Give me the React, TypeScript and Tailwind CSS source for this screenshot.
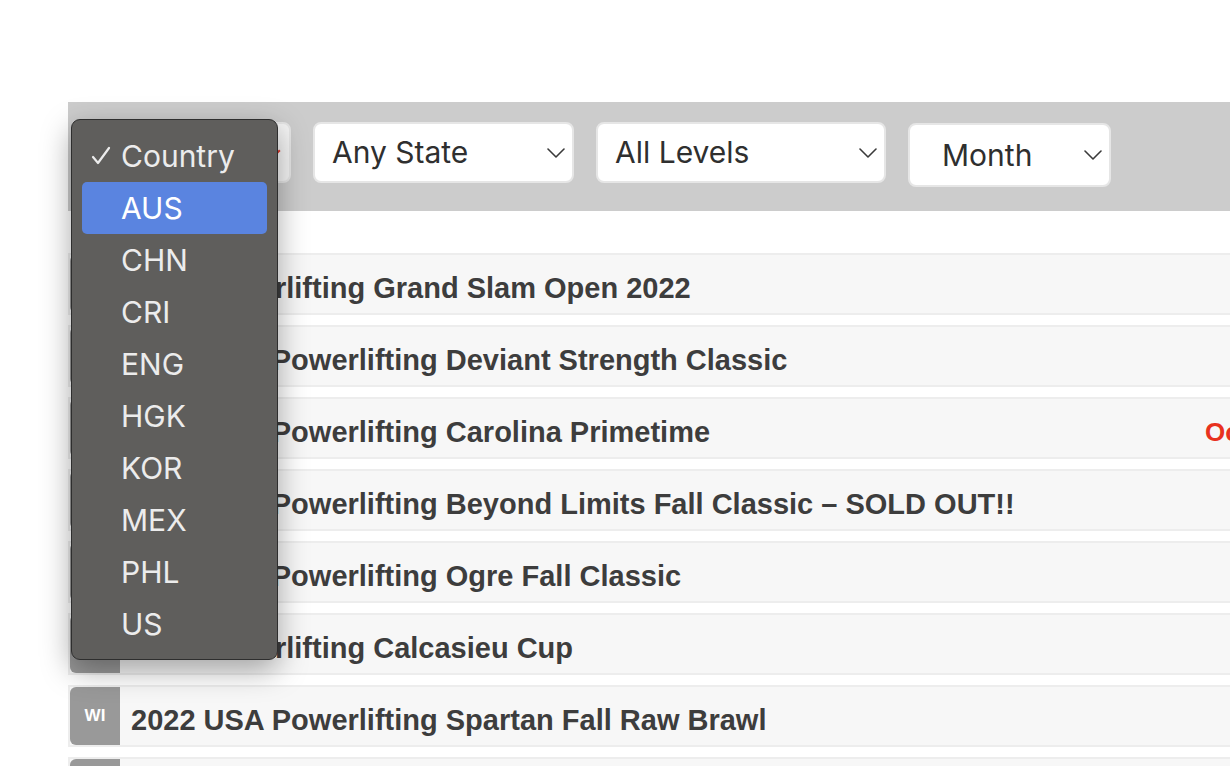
const rows = [
  { st: "", title: "USA Powerlifting Grand Slam Open 2022", date: "" },
  { st: "", title: "2022 USA Powerlifting Deviant Strength Classic", date: "" },
  { st: "", title: "2022 USA Powerlifting Carolina Primetime", date: "Oct 22, 2022" },
  { st: "", title: "2022 USA Powerlifting Beyond Limits Fall Classic – SOLD OUT!!", date: "" },
  { st: "", title: "2022 USA Powerlifting Ogre Fall Classic", date: "" },
  { st: "", title: "USA Powerlifting Calcasieu Cup", date: "" },
  { st: "WI", title: "2022 USA Powerlifting Spartan Fall Raw Brawl", date: "" },
  { st: "", title: "2022 USA Powerlifting Fall Open", date: "" },
];

const countries = ["AUS", "CHN", "CRI", "ENG", "HGK", "KOR", "MEX", "PHL", "US"];

function Chevron() {
  return (
    <svg width="18" height="10" viewBox="0 0 18 10" fill="none" className="shrink-0">
      <polyline points="1,1 9,9 17,1" stroke="#3a3a3a" strokeWidth="1.6" strokeLinecap="round" strokeLinejoin="round" />
    </svg>
  );
}

function Select({ label, w, h = "h-[61px]", pl = "pl-[17px]" }: { label: string; w: string; h?: string; pl?: string }) {
  return (
    <div className={`${w} ${h} ${pl} shrink-0 flex items-center justify-between pr-[7px] bg-white border-2 border-[#e6e6e6] rounded-lg text-[30px] text-[#2f2f2f] font-['Inter',sans-serif]`}>
      <span>{label}</span>
      <Chevron />
    </div>
  );
}

export default function App() {
  return (
    <div className="relative w-full h-screen overflow-hidden bg-white font-['Liberation_Sans',Arial,sans-serif]">
      <div className="pt-[102px] pl-[68px] w-[1400px]">
        <div className="h-[109px] bg-[#cccccc] flex items-start gap-[22px] pl-[4px] pt-[20px]">
          <div className="w-[219px] h-[61px] shrink-0 bg-[#f5f5f5] border-2 border-[#e6e6e6] rounded-lg flex items-center justify-end pr-2">
            <span className="block w-[8px] h-[2px] bg-[#e0362a] -rotate-45" />
          </div>
          <Select label="Any State" w="w-[261px]" />
          <Select label="All Levels" w="w-[290px]" />
          <Select label="Month" w="w-[203px]" h="h-[64px] mt-[1px]" pl="pl-[32px]" />
        </div>

        <div className="mt-[42px] flex flex-col gap-[10px]">
          {rows.map((r, i) => (
            <div key={i} className="h-[62px] w-[1320px] flex items-stretch bg-[#f7f7f7] border-2 border-[#ededed]">
              <div className="w-[50px] shrink-0 bg-[#999999] rounded-l-md flex items-center justify-center text-white text-[17px] font-bold">
                {r.st}
              </div>
              <div className="flex-1 flex items-center pl-[11px] pt-[9px] text-[29px] font-bold text-[#3d3d3d] whitespace-nowrap overflow-hidden">
                {r.title}
              </div>
              <div className="w-[181px] shrink-0 flex items-center pt-[9px] text-[26px] font-bold text-[#e8321e] whitespace-nowrap">
                {r.date}
              </div>
            </div>
          ))}
        </div>
      </div>

      <div className="absolute left-[71px] top-[119px] w-[207px] h-[541px] rounded-[9px] border border-[#2e2e2e] bg-[#5f5e5c] shadow-[0_10px_30px_rgba(0,0,0,0.35)] px-[10px] pt-[10px] font-['Inter',sans-serif] text-[30px] text-[#ececec]">
        <div className="h-[52px] flex items-center relative">
          <svg width="20" height="20" viewBox="0 0 20 20" fill="none" className="absolute left-[9px]">
            <polyline points="2,11 7,17 18,2" stroke="#ececec" strokeWidth="2.2" strokeLinecap="round" strokeLinejoin="round" />
          </svg>
          <span className="pl-[39px]">Country</span>
        </div>
        {countries.map((c) => (
          <div key={c} className={`h-[52px] flex items-center rounded-[5px] ${c === "AUS" ? "bg-[#5a84e0] text-white" : ""}`}>
            <span className="pl-[39px]">{c}</span>
          </div>
        ))}
      </div>
    </div>
  );
}
